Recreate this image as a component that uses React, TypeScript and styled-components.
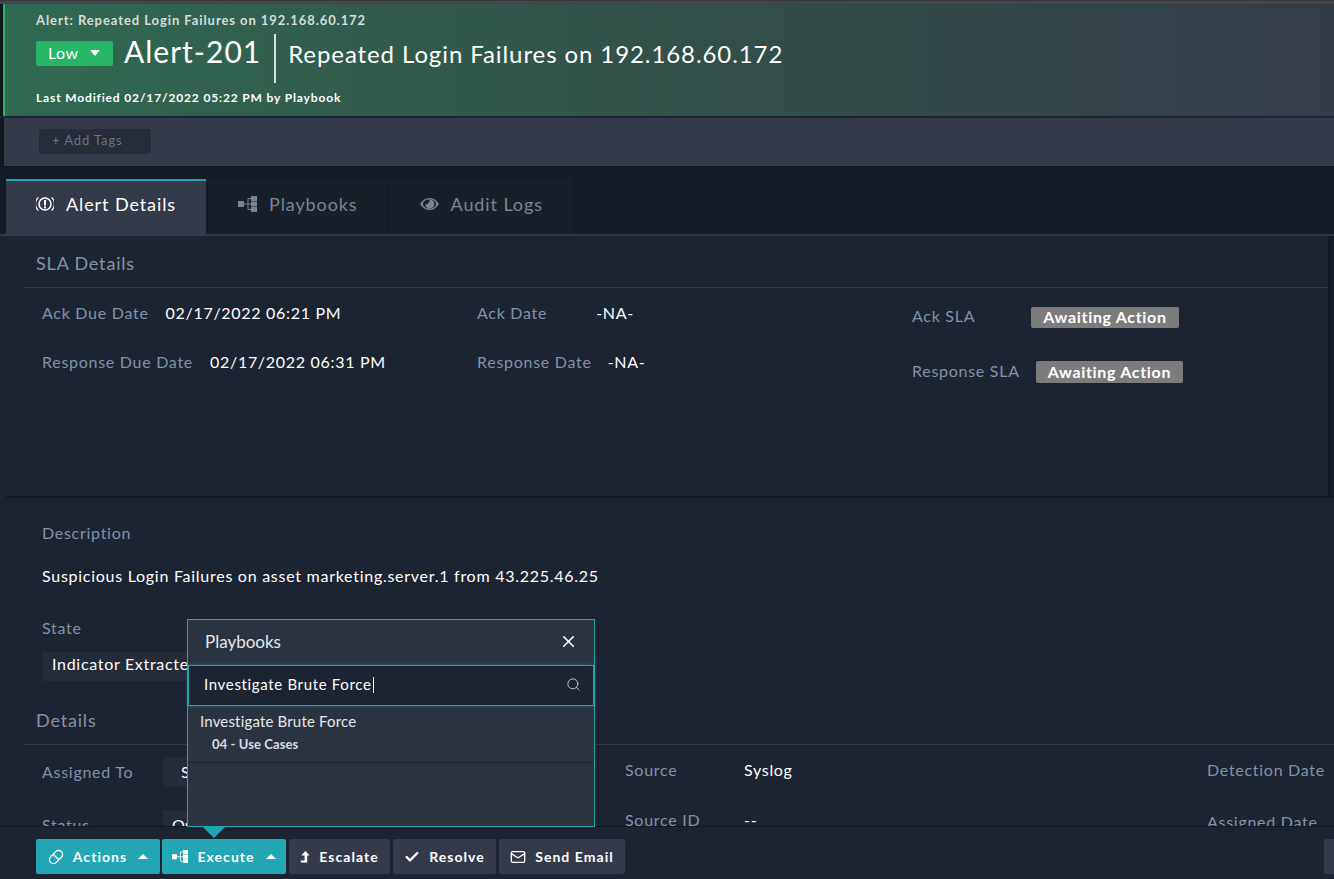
import React from "react";
import styled, { createGlobalStyle } from "styled-components";
import { Check, Mail, Search, X } from "lucide-react";

const GlobalStyle = createGlobalStyle`
  html, body {
    margin: 0;
    padding: 0;
    height: 100%;
    overflow: hidden;
    background: #1d2431;
    font-family: Lato, "Open Sans", sans-serif;
  }
  * { box-sizing: border-box; }
`;

const AlertIcon = () => (
  <svg width="18" height="16" viewBox="0 0 18 16" fill="none">
    <circle cx="9" cy="8" r="6" stroke="#fff" strokeWidth="1.5" />
    <path d="M2.4 1.4A9 9 0 0 0 2.4 14.6M15.6 1.4A9 9 0 0 1 15.6 14.6" stroke="#fff" strokeWidth="1.1" />
    <path d="M9 4V9.4" stroke="#fff" strokeWidth="2" />
    <rect x="8" y="10.4" width="2" height="2" fill="#fff" />
  </svg>
);

const PlaybookIcon = ({ color, size }: { color: string; size: number }) => (
  <svg width={size} height={(size * 16) / 19} viewBox="0 0 19 16" fill={color}>
    <rect x="0" y="5" width="6" height="6" />
    <rect x="13" y="0" width="6" height="5" />
    <rect x="13" y="5.5" width="6" height="5" />
    <rect x="13" y="11" width="6" height="5" />
    <path d="M6 8H13M10 2.5V13.5M10 2.5H13M10 13.5H13" stroke={color} strokeWidth="1" fill="none" />
  </svg>
);

const EyeIcon = () => (
  <svg width="19" height="12" viewBox="0 0 19 12" fill="#7b8494">
    <path d="M0 6C2.6 2 5.8 0 9.5 0S16.4 2 19 6C16.4 10 13.2 12 9.5 12S2.6 10 0 6Z" />
    <ellipse cx="9.5" cy="6" rx="6.6" ry="4.6" fill="#172029" />
    <path d="M9.8 1.4A4.6 4.6 0 1 1 5.2 6.4C7.8 6.4 9.8 4.2 9.8 1.4Z" />
  </svg>
);

const LinkIcon = () => (
  <svg width="16" height="16" viewBox="0 0 16 16" fill="none" stroke="#fff" strokeWidth="1.3">
    <rect x="-4" y="-7.6" width="8" height="15.2" rx="4" transform="translate(8 8) rotate(45)" />
    <path d="M5.2 5.2L10.8 10.8" />
  </svg>
);

const EscalateIcon = () => (
  <svg width="10" height="12" viewBox="0 0 10 12" fill="#fff">
    <path d="M5.4 0L9.6 4.6H7.2V11.4H0.8V9.4H4.6V4.6H1.2Z" />
  </svg>
);

const Page = styled.div`
  width: 1334px;
  height: 879px;
  display: flex;
  flex-direction: column;
  position: relative;
  overflow: hidden;
  background: #1d2431;
`;

const TopStrip = styled.div`
  height: 4px;
  flex: none;
  background: #47484c;
  border-top: 1px solid #38383c;
`;

const BannerWrap = styled.div`
  flex: none;
  padding-left: 3px;
  background: #12171f;
`;

const Banner = styled.header`
  height: 112px;
  padding: 8px 0 0 31px;
  border-left: 2px solid #27b566;
  background: linear-gradient(90deg, #2f6a52 0%, #335049 50%, #343c48 100%);
  color: #fff;
`;

const Breadcrumb = styled.div`
  font-size: 13px;
  line-height: 16px;
  font-weight: 700;
  letter-spacing: 0.93px;
  color: #d5dedb;
`;

const TitleRow = styled.div`
  display: flex;
  align-items: center;
  height: 50px;
`;

const SeverityBadge = styled.div`
  width: 77px;
  height: 25px;
  margin-top: 1px;
  display: flex;
  align-items: center;
  gap: 10px;
  padding: 0 0 2px 12px;
  border-radius: 2px;
  background: #27b566;
  font-size: 16px;
  letter-spacing: 0.4px;
`;

const Caret = styled.span<{ $up?: boolean }>`
  width: 0;
  height: 0;
  margin-left: 2px;
  border-left: 5.5px solid transparent;
  border-right: 5.5px solid transparent;
  ${(p) => (p.$up ? "border-bottom: 5px solid #fff;" : "border-top: 6px solid #fff;")}
`;

const AlertId = styled.div`
  margin-left: 11px;
  padding-right: 13px;
  margin-bottom: 5px;
  font-size: 30px;
  letter-spacing: 1px;
`;

const TitleDivider = styled.div`
  width: 2px;
  height: 49px;
  margin-top: 11px;
  background: #d8e0e0;
`;

const AlertTitle = styled.div`
  margin-left: 12px;
  font-size: 24px;
  letter-spacing: 0.91px;
`;

const Modified = styled.div`
  margin-top: 12px;
  font-size: 12px;
  line-height: 16px;
  font-weight: 700;
  letter-spacing: 0.85px;
`;

const TagsBar = styled.div`
  height: 49px;
  margin-top: 2px;
  flex: none;
  display: flex;
  align-items: center;
  padding: 0 0 2px 35px;
  background: #343a49;
  border-left: 4px solid #12171f;
  border-bottom: 1px solid #12171f;
`;

const AddTags = styled.div`
  width: 112px;
  height: 25px;
  padding-left: 13px;
  border-radius: 2px;
  background: #262c38;
  color: #6d7482;
  font-size: 13px;
  line-height: 22px;
  letter-spacing: 0.9px;
`;

const TabBar = styled.nav`
  height: 69px;
  flex: none;
  display: flex;
  align-items: flex-end;
  padding-left: 6px;
  gap: 2px;
  background: #151c27;
  border-bottom: 2px solid #323a48;
  margin-bottom: -2px;
`;

const Tab = styled.div<{ $active?: boolean }>`
  height: ${(p) => (p.$active ? 57 : 55)}px;
  margin-bottom: ${(p) => (p.$active ? -2 : 0)}px;
  display: flex;
  align-items: center;
  gap: 12px;
  padding: 0 30px ${(p) => (p.$active ? 9 : 7)}px 30px;
  background: ${(p) => (p.$active ? "#343a49" : "#172029")};
  border-top: 2px solid ${(p) => (p.$active ? "#22a6b3" : "#172029")};
  color: ${(p) => (p.$active ? "#fff" : "#7b8494")};
  font-size: 18px;
  letter-spacing: 0.9px;
`;

const Content = styled.main`
  flex: 1;
  min-height: 0;
  overflow: hidden;
  margin-top: 2px;
  margin-left: 6px;
`;

const SectionHead = styled.div`
  margin-left: 18px;
  padding: 16px 0 0 12px;
  height: 52px;
  font-size: 18px;
  line-height: 22px;
  letter-spacing: 0.82px;
  color: #8393a9;
  border-bottom: 1px solid #323a48;
`;

const SlaSection = styled.section`
  height: 262px;
  border-bottom: 2px solid #141a24;
  position: relative;
`;

const SlaGrid = styled.div`
  display: grid;
  grid-template-columns: 435px 435px 1fr;
  padding: 14px 0 0 36px;
`;

const SlaColumn = styled.div<{ $gap: number; $top?: number }>`
  display: flex;
  flex-direction: column;
  gap: ${(p) => p.$gap}px;
  padding-top: ${(p) => p.$top ?? 0}px;
`;

const Field = styled.div<{ $gap: number }>`
  display: flex;
  align-items: center;
  gap: ${(p) => p.$gap}px;
  height: 20px;
`;

const Label = styled.span`
  font-size: 16px;
  letter-spacing: 0.72px;
  color: #8393a9;
`;

const Value = styled.span`
  font-size: 16px;
  letter-spacing: 0.7px;
  color: #fff;
  white-space: nowrap;
`;

const SlaBadge = styled.span<{ $tall?: boolean }>`
  height: ${(p) => (p.$tall ? 22 : 21)}px;
  padding: 0 12px 2px;
  display: inline-flex;
  align-items: center;
  border-radius: 2px;
  background: #7c7c7c;
  color: #fff;
  font-size: 16px;
  font-weight: 700;
  letter-spacing: 0.68px;
  position: relative;
  top: 2px;
`;

const ScrollEdge = styled.div`
  position: absolute;
  top: 0;
  right: 0;
  bottom: 0;
  width: 6px;
  background: #171d28;
  border-left: 2px solid #131822;
`;

const Description = styled.section`
  padding: 25px 0 0 36px;
`;

const DescriptionText = styled.div`
  margin-top: 24px;
  font-size: 16px;
  line-height: 20px;
  letter-spacing: 0.73px;
  color: #fff;
`;

const StateLabel = styled.div`
  margin-top: 32px;
`;

const SelectBox = styled.div`
  width: 240px;
  height: 29px;
  margin-top: 15px;
  padding-left: 10px;
  border-radius: 2px;
  background: #252c39;
  font-size: 16px;
  line-height: 24px;
  letter-spacing: 0.7px;
  color: #fff;
  white-space: nowrap;
  overflow: hidden;
`;

const DetailsHead = styled(SectionHead)`
  margin-top: 28px;
  padding: 0 0 0 12px;
  height: 36px;
`;

const DetailsGrid = styled.div`
  display: grid;
  grid-template-columns: 583px 582px 1fr;
  margin-top: -2px;
  padding-left: 36px;
`;

const DetailColumn = styled.div<{ $top: number; $row: number }>`
  display: grid;
  grid-auto-rows: ${(p) => p.$row}px;
  padding-top: ${(p) => p.$top}px;
`;

const DetailRow = styled.div`
  display: flex;
  align-items: center;
`;

const DetailLabel = styled(Label)`
  width: 119px;
  white-space: nowrap;
`;

const SmallSelect = styled.div<{ $inset: number }>`
  width: 200px;
  height: 30px;
  margin-left: 2px;
  padding-left: ${(p) => p.$inset}px;
  border-radius: 2px;
  background: #252c39;
  font-size: 16px;
  line-height: 29px;
  color: #fff;
`;

const Popover = styled.div`
  position: absolute;
  left: 187px;
  top: 619px;
  width: 408px;
  height: 208px;
  background: #2c3340;
  border: 1px solid #22a6b3;
  z-index: 2;
`;

const PopoverHead = styled.div`
  height: 45px;
  display: flex;
  align-items: center;
  justify-content: space-between;
  padding: 0 16px 3px 17px;
  font-size: 17px;
  color: #e6e9ee;
`;

const SearchField = styled.div`
  height: 41px;
  display: flex;
  align-items: center;
  justify-content: space-between;
  padding: 0 12px 3px 15px;
  background: #1d2431;
  border: 1px solid #22a6b3;
  box-shadow: 0 0 4px rgba(34, 166, 179, 0.45);
  font-size: 15px;
  letter-spacing: 0.66px;
  color: #fff;
  position: relative;
`;

const TextCursor = styled.span`
  display: inline-block;
  width: 1px;
  height: 16px;
  margin-left: 1px;
  vertical-align: -3px;
  background: #fff;
`;

const ResultItem = styled.div`
  height: 57px;
  padding: 5px 12px 0;
  border-bottom: 1px solid #1d2431;
`;

const ResultName = styled.div`
  font-size: 15px;
  line-height: 20px;
  letter-spacing: 0.17px;
  color: #e6e9ee;
`;

const ResultFolder = styled.div`
  margin: 5px 0 0 12px;
  font-size: 13px;
  font-weight: 700;
  line-height: 16px;
  letter-spacing: 0.1px;
  color: #d8dde4;
`;

const Pointer = styled.div`
  position: absolute;
  left: 203px;
  top: 827px;
  width: 0;
  height: 0;
  border-left: 11px solid transparent;
  border-right: 11px solid transparent;
  border-top: 11px solid #22a6b3;
  z-index: 3;
`;

const ActionBar = styled.footer`
  height: 53px;
  flex: none;
  display: flex;
  align-items: flex-start;
  gap: 3px;
  padding: 12px 0 0 36px;
  background: #1d2431;
  border-top: 1px solid #12171f;
  position: relative;
`;

const ActionButton = styled.button<{ $primary?: boolean; $width: number; $tight?: boolean }>`
  width: ${(p) => p.$width}px;
  height: 35px;
  margin-right: ${(p) => (p.$tight ? -1 : 0)}px;
  display: flex;
  align-items: center;
  justify-content: center;
  gap: 9px;
  border: 0;
  border-radius: 2px;
  padding: 0;
  background: ${(p) => (p.$primary ? "#22a6b3" : "#343a49")};
  color: #fff;
  font-family: inherit;
  font-size: 14px;
  font-weight: 700;
  letter-spacing: 1.05px;
`;

const CornerButton = styled.div`
  position: absolute;
  right: 0;
  top: 12px;
  width: 10px;
  height: 35px;
  border-radius: 2px 0 0 2px;
  background: #343a49;
`;

const App = () => {
  return (
    <Page>
      <GlobalStyle />
      <TopStrip />
      <BannerWrap>
        <Banner>
          <Breadcrumb>Alert: Repeated Login Failures on 192.168.60.172</Breadcrumb>
          <TitleRow>
            <SeverityBadge>
              Low <Caret />
            </SeverityBadge>
            <AlertId>Alert-201</AlertId>
            <TitleDivider />
            <AlertTitle>Repeated Login Failures on 192.168.60.172</AlertTitle>
          </TitleRow>
          <Modified>Last Modified 02/17/2022 05:22 PM by Playbook</Modified>
        </Banner>
      </BannerWrap>
      <TagsBar>
        <AddTags>+ Add Tags</AddTags>
      </TagsBar>
      <TabBar>
        <Tab $active>
          <AlertIcon />
          Alert Details
        </Tab>
        <Tab>
          <PlaybookIcon color="#7b8494" size={19} />
          Playbooks
        </Tab>
        <Tab>
          <EyeIcon />
          Audit Logs
        </Tab>
      </TabBar>
      <Content>
        <SlaSection>
          <ScrollEdge />
          <SectionHead>SLA Details</SectionHead>
          <SlaGrid>
            <SlaColumn $gap={29}>
              <Field $gap={17}>
                <Label>Ack Due Date</Label>
                <Value>02/17/2022 06:21 PM</Value>
              </Field>
              <Field $gap={17}>
                <Label>Response Due Date</Label>
                <Value>02/17/2022 06:31 PM</Value>
              </Field>
            </SlaColumn>
            <SlaColumn $gap={29}>
              <Field $gap={49}>
                <Label>Ack Date</Label>
                <Value>-NA-</Value>
              </Field>
              <Field $gap={16}>
                <Label>Response Date</Label>
                <Value>-NA-</Value>
              </Field>
            </SlaColumn>
            <SlaColumn $gap={35} $top={3}>
              <Field $gap={56}>
                <Label>Ack SLA</Label>
                <SlaBadge>Awaiting Action</SlaBadge>
              </Field>
              <Field $gap={16}>
                <Label>Response SLA</Label>
                <SlaBadge $tall>Awaiting Action</SlaBadge>
              </Field>
            </SlaColumn>
          </SlaGrid>
        </SlaSection>
        <Description>
          <Label>Description</Label>
          <DescriptionText>Suspicious Login Failures on asset marketing.server.1 from 43.225.46.25</DescriptionText>
          <StateLabel>
            <Label>State</Label>
          </StateLabel>
          <SelectBox>Indicator Extracted</SelectBox>
        </Description>
        <DetailsHead>Details</DetailsHead>
        <DetailsGrid>
          <DetailColumn $top={2} $row={53}>
            <DetailRow>
              <DetailLabel>Assigned To</DetailLabel>
              <SmallSelect $inset={18}>Select</SmallSelect>
            </DetailRow>
            <DetailRow>
              <DetailLabel>Status</DetailLabel>
              <SmallSelect $inset={9}>Open</SmallSelect>
            </DetailRow>
          </DetailColumn>
          <DetailColumn $top={1} $row={50}>
            <DetailRow>
              <DetailLabel>Source</DetailLabel>
              <Value>Syslog</Value>
            </DetailRow>
            <DetailRow>
              <DetailLabel>Source ID</DetailLabel>
              <Value>--</Value>
            </DetailRow>
          </DetailColumn>
          <DetailColumn $top={0} $row={52}>
            <DetailRow>
              <DetailLabel>Detection Date</DetailLabel>
            </DetailRow>
            <DetailRow>
              <DetailLabel>Assigned Date</DetailLabel>
            </DetailRow>
          </DetailColumn>
        </DetailsGrid>
      </Content>
      <ActionBar>
        <ActionButton $primary $tight $width={124}>
          <LinkIcon />
          Actions
          <Caret $up />
        </ActionButton>
        <ActionButton $primary $width={124}>
          <PlaybookIcon color="#fff" size={16} />
          Execute
          <Caret $up />
        </ActionButton>
        <ActionButton $width={101}>
          <EscalateIcon />
          Escalate
        </ActionButton>
        <ActionButton $width={103}>
          <Check size={16} strokeWidth={3.5} />
          Resolve
        </ActionButton>
        <ActionButton $width={126}>
          <Mail size={16} strokeWidth={2} />
          Send Email
        </ActionButton>
        <CornerButton />
      </ActionBar>
      <Popover>
        <PopoverHead>
          Playbooks
          <X size={19} strokeWidth={2} color="#fff" />
        </PopoverHead>
        <SearchField>
          <span>
            Investigate Brute Force
            <TextCursor />
          </span>
          <Search size={15} strokeWidth={1.5} color="#c9ced6" />
        </SearchField>
        <ResultItem>
          <ResultName>Investigate Brute Force</ResultName>
          <ResultFolder>04 - Use Cases</ResultFolder>
        </ResultItem>
      </Popover>
      <Pointer />
    </Page>
  );
};

export default App;
